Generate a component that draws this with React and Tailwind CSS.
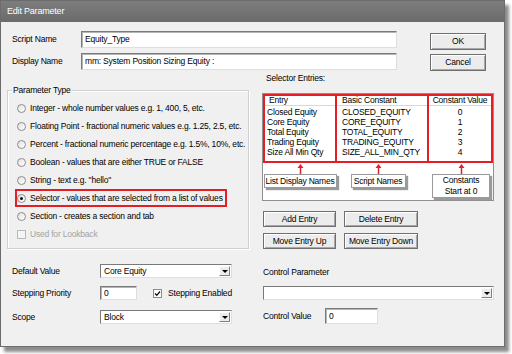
import { clsx } from 'clsx';

// Windows-ish dialog pieces
const Input = ({ className, children }) => (
    <div className={clsx('bg-white border border-t-[#7a7a7a] border-l-[#7a7a7a] border-b-[#dedede] border-r-[#dedede] shadow-[inset_1px_1px_0_#b5b5b5] flex items-center pl-[3px] whitespace-nowrap overflow-hidden', className)}>
        {children}
    </div>
);

const Select = ({ className, value }) => (
    <div className={clsx('bg-white border border-t-[#7a7a7a] border-l-[#7a7a7a] border-b-[#dedede] border-r-[#dedede] flex items-stretch', className)}>
        <span className="flex-1 flex items-center pl-[3px]">{value}</span>
        <div className="w-[11px] my-[1px] mr-[1px] bg-[#ececec] border border-t-white border-l-white border-b-[#808080] border-r-[#808080] flex items-center justify-center">
            <div className="w-0 h-0 border-l-[3px] border-r-[3px] border-t-[3px] border-l-transparent border-r-transparent border-t-black" />
        </div>
    </div>
);

const Btn = ({ className, children }) => (
    <div className={clsx('flex items-center justify-center whitespace-nowrap bg-[#ececec] border border-[#6f6f6f] shadow-[inset_1px_1px_0_#ffffff,inset_-1px_-1px_0_#a8a8a8]', className)}>
        {children}
    </div>
);

const Radio = ({ checked }) => (
    <div className="w-[9px] h-[9px] rounded-full border border-[#8c8c8c] bg-gradient-to-br from-[#e2e2e2] to-white flex items-center justify-center shrink-0">
        {checked && <div className="w-[3px] h-[3px] rounded-full bg-[#111]" />}
    </div>
);

const UpArrow = () => (
    <svg width="7" height="10" viewBox="0 0 7 10" className="block">
        <line x1="3.5" y1="3" x2="3.5" y2="10" stroke="#e31e24" strokeWidth="1.5" />
        <polygon points="0.5,4 3.5,0 6.5,4" fill="#e31e24" />
    </svg>
);

const Callout = ({ className, children }) => (
    <div className={clsx('bg-white border border-[#9a9a9a] shadow-[2px_2px_1px_#9a9a9a] flex items-center justify-center text-center whitespace-nowrap leading-[11px]', className)}>
        {children}
    </div>
);

const TYPES = [
    'Integer - whole number values e.g. 1, 400, 5, etc.',
    'Floating Point - fractional numeric values e.g. 1.25, 2.5, etc.',
    'Percent - fractional numeric percentage e.g. 1.5%, 10%, etc.',
    'Boolean - values that are either TRUE or FALSE',
    'String - text e.g. "hello"',
];

const ENTRIES = [
    ['Closed Equity', 'CLOSED_EQUITY', '0'],
    ['Core Equity', 'CORE_EQUITY', '1'],
    ['Total Equity', 'TOTAL_EQUITY', '2'],
    ['Trading Equity', 'TRADING_EQUITY', '3'],
    ['Size All Min Qty', 'SIZE_ALL_MIN_QTY', '4'],
];

export default function App() {
    return (
        <div className="w-[512px] h-[354px] bg-white text-black text-[8.5px] tracking-[-0.2px] leading-none font-['Liberation_Sans',Arial,sans-serif]">
            <div className="w-[505px] h-[347px] border border-[#6c6c6c] bg-[#f0f0f0] shadow-[4px_5px_3px_rgba(0,0,0,0.45)] flex flex-col">
                {/* title bar */}
                <div className="h-[21px] shrink-0 bg-gradient-to-b from-[#7d7d7d] to-[#6b6b6b] text-white text-[9px] flex items-center pl-[6px]">
                    Edit Parameter
                </div>

                {/* names + OK/Cancel */}
                <div className="flex pt-[9px] pl-[11px]">
                    <div className="flex flex-col gap-[5px]">
                        <div className="flex items-center h-[17px]">
                            <span className="w-[69px]">Script Name</span>
                            <Input className="w-[316px] h-[17px]">Equity_Type</Input>
                        </div>
                        <div className="flex items-center h-[17px]">
                            <span className="w-[69px]">Display Name</span>
                            <Input className="w-[316px] h-[17px]">mm: System Position Sizing Equity :</Input>
                        </div>
                    </div>
                    <div className="flex flex-col gap-[4px] ml-[33px] pt-[2px]">
                        <Btn className="w-[56px] h-[17px]">OK</Btn>
                        <Btn className="w-[56px] h-[17px]">Cancel</Btn>
                    </div>
                </div>

                <div className="flex pl-[6px]">
                    {/* left column */}
                    <div className="w-[242px] flex flex-col">
                        <div className="relative mt-[19px] h-[159px] border border-[#d0d0d0] shadow-[inset_1px_1px_0_#fff,1px_1px_0_#fff] pt-[8px]">
                            <span className="absolute -top-[5px] left-[4px] bg-[#f0f0f0] px-[1px]">Parameter Type</span>
                            {TYPES.map((t) => (
                                <div key={t} className="flex items-center h-[18px] pl-[9px] gap-[4px] whitespace-nowrap">
                                    <Radio />
                                    <span>{t}</span>
                                </div>
                            ))}
                            <div className="flex items-center h-[18px] ml-[7px] w-[212px] border-2 border-[#e31e24] gap-[4px] whitespace-nowrap">
                                <Radio checked />
                                <span>Selector - values that are selected from a list of values</span>
                            </div>
                            <div className="flex items-center h-[18px] pl-[9px] gap-[4px]">
                                <Radio />
                                <span>Section - creates a section and tab</span>
                            </div>
                            <div className="flex items-center h-[18px] pl-[9px] gap-[4px] text-[#a3a3a3]">
                                <div className="w-[9px] h-[9px] border border-[#b9b9b9] bg-[#f4f4f4] shrink-0" />
                                <span>Used for Lookback</span>
                            </div>
                        </div>

                        <div className="flex items-center mt-[15px] pl-[5px]">
                            <span className="w-[88px]">Default Value</span>
                            <Select className="w-[132px] h-[14px]" value="Core Equity" />
                        </div>
                        <div className="flex items-center mt-[8px] pl-[5px]">
                            <span className="w-[88px]">Stepping Priority</span>
                            <Input className="w-[37px] h-[14px]">0</Input>
                            <div className="ml-[16px] w-[9px] h-[9px] border border-[#8c8c8c] bg-white flex items-center justify-center">
                                <svg width="7" height="7" viewBox="0 0 7 7">
                                    <path d="M1 3.5 L2.8 5.3 L6 1.5" stroke="#111" strokeWidth="1.3" fill="none" />
                                </svg>
                            </div>
                            <span className="ml-[6px]">Stepping Enabled</span>
                        </div>
                        <div className="flex items-center mt-[10px] pl-[5px]">
                            <span className="w-[88px]">Scope</span>
                            <Select className="w-[132px] h-[14px]" value="Block" />
                        </div>
                    </div>

                    {/* right column */}
                    <div className="ml-[13px] w-[232px] flex flex-col">
                        <span className="mt-[3px] pl-[4px] h-[10px]">Selector Entries:</span>
                        <div className="mt-[9px] h-[108px] bg-white border border-[#8f8f8f] flex flex-col">
                            <div className="flex h-[69px]">
                                <div className="w-[74px] border-2 border-[#e31e24] flex flex-col">
                                    <div className="h-[10px] border-b border-[#d8d8d8] pl-[4px] flex items-center">Entry</div>
                                    <div className="pt-[1px] pl-[2px]">
                                        {ENTRIES.map((e) => <div key={e[0]} className="h-[10px] flex items-center whitespace-nowrap">{e[0]}</div>)}
                                    </div>
                                </div>
                                <div className="w-[92px] border-y-2 border-r-2 border-[#e31e24] flex flex-col">
                                    <div className="h-[10px] border-b border-[#d8d8d8] pl-[5px] flex items-center">Basic Constant</div>
                                    <div className="pt-[1px] pl-[5px]">
                                        {ENTRIES.map((e) => <div key={e[1]} className="h-[10px] flex items-center whitespace-nowrap">{e[1]}</div>)}
                                    </div>
                                </div>
                                <div className="w-[64px] border-y-2 border-r-2 border-[#e31e24] flex flex-col">
                                    <div className="h-[10px] border-b border-[#d8d8d8] flex items-center justify-center whitespace-nowrap">Constant Value</div>
                                    <div className="pt-[1px]">
                                        {ENTRIES.map((e) => <div key={e[2]} className="h-[10px] flex items-center justify-center">{e[2]}</div>)}
                                    </div>
                                </div>
                            </div>
                            <div className="flex">
                                <div className="w-[74px] flex flex-col items-center pt-[1px]">
                                    <UpArrow />
                                    <Callout className="w-[73px] h-[14px]">List Display Names</Callout>
                                </div>
                                <div className="w-[92px] flex flex-col items-center pt-[1px] pr-[10px]">
                                    <UpArrow />
                                    <Callout className="w-[55px] h-[14px]">Script Names</Callout>
                                </div>
                                <div className="w-[64px] flex flex-col items-center pt-[1px]">
                                    <UpArrow />
                                    <Callout className="w-[58px] h-[24px]">Constants<br />Start at 0</Callout>
                                </div>
                            </div>
                        </div>

                        <div className="flex gap-[8px] mt-[10px] pl-[1px]">
                            <Btn className="w-[73px] h-[16px]">Add Entry</Btn>
                            <Btn className="w-[74px] h-[16px]">Delete Entry</Btn>
                        </div>
                        <div className="flex gap-[8px] mt-[6px] pl-[1px]">
                            <Btn className="w-[73px] h-[16px]">Move Entry Up</Btn>
                            <Btn className="w-[74px] h-[16px]">Move Entry Down</Btn>
                        </div>

                        <span className="mt-[19px] pl-[1px] h-[10px]">Control Parameter</span>
                        <Select className="mt-[8px] ml-[1px] w-[231px] h-[14px]" value="" />
                        <div className="flex items-center mt-[8px] pl-[1px]">
                            <span className="w-[62px]">Control Value</span>
                            <Input className="w-[53px] h-[16px]">0</Input>
                        </div>
                    </div>
                </div>
            </div>
        </div>
    );
}
